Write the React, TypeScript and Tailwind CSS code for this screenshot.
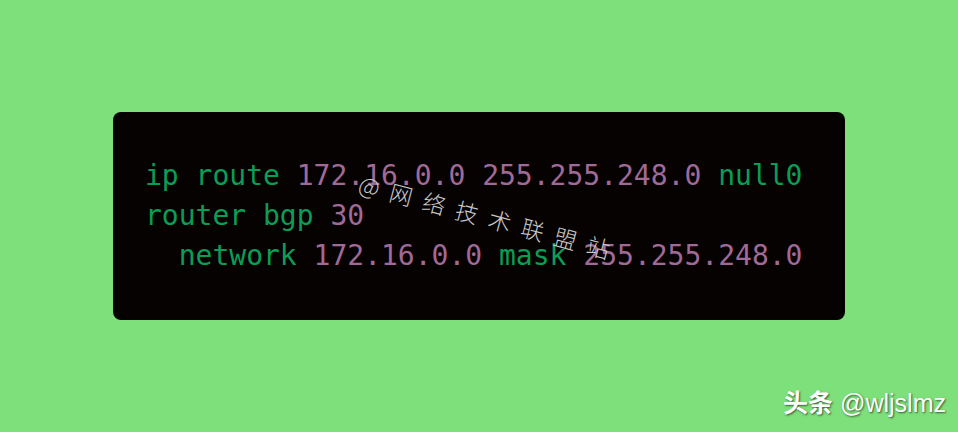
const lines = [
  [
    { t: "ip route ", c: "g" },
    { t: "172.16.0.0 255.255.248.0 ", c: "p" },
    { t: "null0", c: "g" },
  ],
  [
    { t: "router bgp ", c: "g" },
    { t: "30", c: "p" },
  ],
  [
    { t: "  network ", c: "g" },
    { t: "172.16.0.0 ", c: "p" },
    { t: "mask ", c: "g" },
    { t: "255.255.248.0", c: "p" },
  ],
];

export default function App() {
  return (
    <div className="relative flex h-[432px] w-[958px] items-center justify-center overflow-hidden bg-[#7ee07a]">
      <div className="flex h-[208px] w-[732px] flex-col justify-center rounded-lg bg-[#070202] px-[32px]">
        {lines.map((line, i) => (
          <pre
            key={i}
            className="whitespace-pre text-[28px] leading-[40px]"
            style={{ fontFamily: '"DejaVu Sans Mono", monospace' }}
          >
            {line.map((s, j) => (
              <span key={j} className={s.c === "g" ? "text-[#0a9d55]" : "text-[#a06a98]"}>
                {s.t}
              </span>
            ))}
          </pre>
        ))}
      </div>

      <div
        className="absolute left-[364px] top-[166px] origin-top-left rotate-[15deg] whitespace-nowrap text-[23px] font-light tracking-[11px] text-[#c9c9c9]"
        style={{ fontFamily: '"Noto Sans CJK SC", sans-serif' }}
      >
        @网络技术联盟站
      </div>

      <div
        className="absolute right-[12px] bottom-[10px] text-[25px] text-white [text-shadow:1px_1px_2px_rgba(0,0,0,0.6)]"
        style={{ fontFamily: '"Liberation Sans", "Noto Sans CJK SC", sans-serif' }}
      >
        <span className="font-bold">头条</span> @wljslmz
      </div>
    </div>
  );
}
